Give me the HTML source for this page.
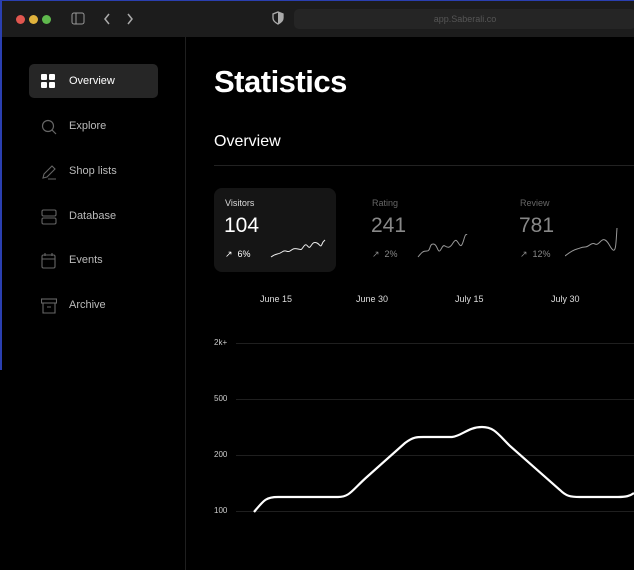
<!DOCTYPE html>
<html><head><style>
*{margin:0;padding:0;box-sizing:border-box}
body{width:634px;height:570px;background:#000;font-family:"Liberation Sans",sans-serif;position:relative;overflow:hidden;color:#fff}
.top{position:absolute;left:0;top:0;width:634px;height:37px;background:#1c1c1c;border-top:1px solid #2a3fb0;border-left:2px solid #2a3fb0}
.dot{position:absolute;top:14px;width:9px;height:9px;border-radius:50%}
.url{position:absolute;left:292px;top:8px;width:342px;height:20px;background:#252525;border-radius:5px;color:#555;font-size:9px;text-align:center;line-height:20px}
.lb{position:absolute;left:0;top:37px;width:2px;height:333px;background:#2a3fb0}
.side{position:absolute;left:185px;top:37px;width:1px;height:533px;background:#1f1f1f}
.nav{position:absolute;left:29px;width:129px;height:34px;font-size:11px;color:#bbb;line-height:34px;padding-left:40px;border-radius:5px}
.nav svg{position:absolute;left:12px;top:10px}
.act{background:#262626;color:#fff}
h1{position:absolute;left:214px;top:64px;font-size:31px;font-weight:bold;letter-spacing:-0.5px}
h2{position:absolute;left:214px;top:133px;font-size:16px;font-weight:normal}
.hr{position:absolute;left:214px;top:165px;width:420px;height:1px;background:#222}
.card{position:absolute;top:188px;width:122px;height:84px;border-radius:8px}
.card .l{position:absolute;left:11px;top:10px;font-size:9px}
.card .n{position:absolute;left:10px;top:26px;font-size:21px}
.card .p{position:absolute;left:11px;top:61px;font-size:9px}
.card svg{position:absolute;left:56px;top:46px}
.d{position:absolute;top:294px;font-size:9px;color:#ddd}
.y{position:absolute;left:214px;font-size:8px;color:#ccc}
</style></head><body>
<div class="top">
<div class="dot" style="left:14px;background:#e0564f"></div>
<div class="dot" style="left:27px;background:#e0b23c"></div>
<div class="dot" style="left:40px;background:#5fb94d"></div>
<svg style="position:absolute;left:69px;top:11px" width="14" height="13"><rect x="1" y="1" width="12" height="11" rx="2" fill="none" stroke="#999"/><line x1="5" y1="1" x2="5" y2="12" stroke="#999"/></svg>
<svg style="position:absolute;left:100px;top:11px" width="40" height="14"><path d="M7 2L3 7L7 12M26 2L30 7L26 12" fill="none" stroke="#aaa" stroke-width="1.5"/></svg>
<svg style="position:absolute;left:270px;top:10px" width="12" height="14"><path d="M6 1L11 3V7C11 10 8 12 6 13C4 12 1 10 1 7V3Z" fill="none" stroke="#aaa" stroke-width="1.3"/><path d="M6 1L11 3V7C11 10 8 12 6 13Z" fill="#aaa"/></svg>
<div class="url">app.Saberali.co</div>
</div>
<div class="lb"></div>
<div class="side"></div>
<div class="nav act" style="top:64px"><svg width="14" height="14"><rect x="0" y="0" width="6" height="6" rx="1" fill="#fff"/><rect x="8" y="0" width="6" height="6" rx="1" fill="#fff"/><rect x="0" y="8" width="6" height="6" rx="1" fill="#fff"/><rect x="8" y="8" width="6" height="6" rx="1" fill="#fff"/></svg>Overview</div>
<div class="nav" style="top:109px"><svg width="16" height="16"><circle cx="7" cy="7" r="5.5" fill="none" stroke="#666" stroke-width="1.2"/><path d="M11 11L15 15" stroke="#666" stroke-width="1.2"/></svg>Explore</div>
<div class="nav" style="top:154px"><svg width="16" height="16"><path d="M2 14L3 10L11 2L14 5L6 13Z M7 15H15" fill="none" stroke="#666" stroke-width="1.1"/></svg>Shop lists</div>
<div class="nav" style="top:199px"><svg width="16" height="16"><rect x="1" y="1" width="14" height="6" rx="1.5" fill="none" stroke="#666" stroke-width="1.1"/><rect x="1" y="9" width="14" height="6" rx="1.5" fill="none" stroke="#666" stroke-width="1.1"/></svg>Database</div>
<div class="nav" style="top:243px"><svg width="16" height="16"><rect x="1" y="2" width="13" height="13" rx="1.5" fill="none" stroke="#666" stroke-width="1.1"/><path d="M1 6H14M4 0V3M11 0V3" stroke="#666" stroke-width="1.1"/></svg>Events</div>
<div class="nav" style="top:288px"><svg width="16" height="16"><rect x="0.5" y="1" width="15" height="4" fill="none" stroke="#666" stroke-width="1.1"/><path d="M2 5V15H14V5M6 9H10" fill="none" stroke="#666" stroke-width="1.1"/></svg>Archive</div>
<h1>Statistics</h1>
<h2>Overview</h2>
<div class="hr"></div>
<div class="card" style="left:214px;background:#151515"><div class="l" style="color:#ddd">Visitors</div><div class="n">104</div><div class="p">↗ &nbsp;6%</div>
<svg width="56" height="26"><path d="M1 23C6 19 8 21 12 18S17 19 20 17S24 14 28 15S31 16 34 12S38 15 40 13S43 7 47 9S50 15 53 8L55 6" fill="none" stroke="#eee" stroke-width="1"/></svg></div>
<div class="card" style="left:361px"><div class="l" style="color:#666">Rating</div><div class="n" style="color:#888">241</div><div class="p" style="color:#888">↗ &nbsp;2%</div>
<svg width="56" height="26"><path d="M1 23C5 18 6 17 10 17S12 10 16 10S20 16 22 17S25 10 28 12S33 14 36 9S40 7 42 10S45 12 47 5S49 2 50 0" fill="none" stroke="#999" stroke-width="1"/></svg></div>
<div class="card" style="left:509px"><div class="l" style="color:#666">Review</div><div class="n" style="color:#888">781</div><div class="p" style="color:#888">↗ &nbsp;12%</div>
<svg width="60" height="30" style="top:40px"><path d="M0 28C5 24 8 22 12 21S16 19 20 19S26 14 30 16S36 10 40 12S45 20 48 22S51 14 52 0" fill="none" stroke="#999" stroke-width="1"/></svg></div>
<div class="d" style="left:260px">June 15</div>
<div class="d" style="left:356px">June 30</div>
<div class="d" style="left:455px">July 15</div>
<div class="d" style="left:551px">July 30</div>
<div class="y" style="top:338px">2k+</div>
<div class="y" style="top:394px">500</div>
<div class="y" style="top:450px">200</div>
<div class="y" style="top:506px">100</div>
<svg style="position:absolute;left:0;top:0" width="634" height="570">
<g stroke="#1f1f1f"><line x1="236" y1="343.5" x2="634" y2="343.5"/><line x1="236" y1="399.5" x2="634" y2="399.5"/><line x1="236" y1="455.5" x2="634" y2="455.5"/><line x1="236" y1="511.5" x2="634" y2="511.5"/></g>
<path d="M254 512C264 500 266 497 278 497L338 497C350 497 352 490 368 476L405 443C414 436 418 437 428 437L452 437C462 436 468 427 482 427C494 427 498 434 510 446L560 490C566 496 570 497 580 497L618 497C626 497 630 496 634 493" fill="none" stroke="#fff" stroke-width="2.2"/>
</svg>
</body></html>
